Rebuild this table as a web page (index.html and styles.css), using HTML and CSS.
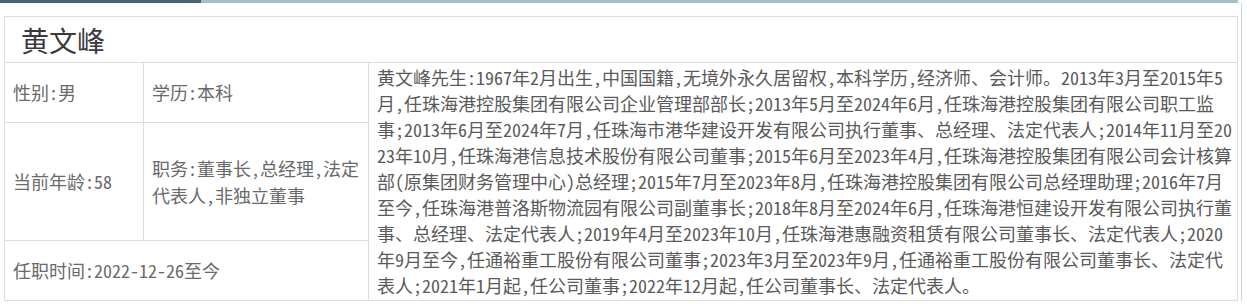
FILE: index.html
```html
<!DOCTYPE html>
<html lang="zh-CN">
<head>
<meta charset="utf-8">
<title>黄文峰</title>
<link rel="stylesheet" href="styles.css">
</head>
<body>
<div class="panel">
  <div class="tabbar"><div class="tab-active"></div><div class="tab-rest"></div></div>
  <div class="panel-body">
    <table class="profile">
      <colgroup><col class="w1"><col class="w2"><col class="w3"></colgroup>
      <tr class="r-name"><th colspan="3" class="name">黄文峰</th></tr>
      <tr class="r1">
        <td class="label">性别:男</td>
        <td class="label">学历:本科</td>
        <td class="bio" rowspan="3">黄文峰先生:1967年2月出生,中国国籍,无境外永久居留权,本科学历,经济师、会计师。2013年3月至2015年5月,任珠海港控股集团有限公司企业管理部部长;2013年5月至2024年6月,任珠海港控股集团有限公司职工监事;2013年6月至2024年7月,任珠海市港华建设开发有限公司执行董事、总经理、法定代表人;2014年11月至2023年10月,任珠海港信息技术股份有限公司董事;2015年6月至2023年4月,任珠海港控股集团有限公司会计核算部(原集团财务管理中心)总经理;2015年7月至2023年8月,任珠海港控股集团有限公司总经理助理;2016年7月至今,任珠海港普洛斯物流园有限公司副董事长;2018年8月至2024年6月,任珠海港恒建设开发有限公司执行董事、总经理、法定代表人;2019年4月至2023年10月,任珠海港惠融资租赁有限公司董事长、法定代表人;2020年9月至今,任通裕重工股份有限公司董事;2023年3月至2023年9月,任通裕重工股份有限公司董事长、法定代表人;2021年1月起,任公司董事;2022年12月起,任公司董事长、法定代表人。</td>
      </tr>
      <tr class="r2">
        <td class="label">当前年龄:58</td>
        <td class="label">职务:董事长,总经理,法定代表人,非独立董事</td>
      </tr>
      <tr class="r3">
        <td class="label" colspan="2">任职时间:2022-12-26至今</td>
      </tr>
    </table>
    <div class="next"></div>
  </div>
</div>
</body>
</html>
```

FILE: styles.css
```css
html, body {
  margin: 0;
  padding: 0;
  background: #ffffff;
}

body {
  font-family: "Noto Sans CJK SC", "Noto Sans", sans-serif;
  color: #555555;
}

.panel {
  width: 1243px;
}

.tabbar {
  display: flex;
  height: 3px;
  width: 1238px;
}

.tab-active {
  width: 201px;
  background: #456576;
}

.tab-rest {
  flex: 1;
  background: #a5bfc8;
}

.panel-body {
  border-right: 1px solid #bcd6e2;
  padding: 13px 4px 0 4px;
  height: 298px;
  box-sizing: border-box;
  width: 1242px;
}

.profile {
  border-collapse: collapse;
  table-layout: fixed;
  width: 1234px;
}

.w1 { width: 139px; }
.w2 { width: 225px; }

.profile th,
.profile td {
  border: 1px solid #dddddd;
  padding: 0 8px;
  vertical-align: middle;
  text-align: left;
  font-weight: normal;
}

.r-name { height: 46px; }
.r1 { height: 60px; }
.r2 { height: 118px; }
.r3 { height: 60px; }

.name {
  font-size: 28px;
  color: #3a3a3a;
  padding-left: 16px !important;
  line-height: 40px;
}

.label {
  font-size: 18px;
  line-height: 27px;
  color: #6a6a6a;
  font-feature-settings: "hwid" 1;
  word-break: break-all;
}

.bio {
  font-size: 18px;
  line-height: 26px;
  color: #5a5a5a;
  font-feature-settings: "hwid" 1;
  word-break: break-all;
  padding: 1px 2px 2px 8px !important;
  vertical-align: top !important;
}

.next {
  margin-top: 2px;
  height: 4px;
  border-top: 1px solid #e4e4e4;
  border-left: 1px solid #e4e4e4;
}
```
